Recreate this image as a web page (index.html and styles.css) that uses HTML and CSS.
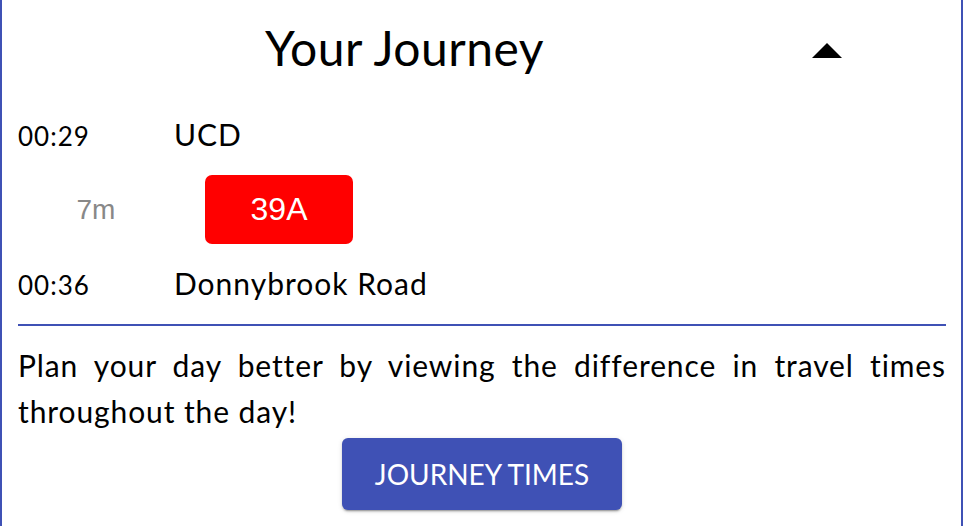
FILE: index.html
```html
<!DOCTYPE html>
<html>
<head>
<meta charset="utf-8">
<link rel="stylesheet" href="styles.css">
</head>
<body>
<div class="panel">
  <div class="header">
    <div class="title">Your Journey</div>
    <svg class="toggle" viewBox="0 0 24 24" width="72" height="72"><path d="M7 14l5-5 5 5z" fill="#000"/></svg>
  </div>
  <div class="stop first">
    <div class="time">00:29</div>
    <div class="name">UCD</div>
  </div>
  <div class="leg">
    <div class="duration">7m</div>
    <div class="badge">39A</div>
  </div>
  <div class="stop">
    <div class="time">00:36</div>
    <div class="name">Donnybrook Road</div>
  </div>
  <div class="divider"></div>
  <p class="info">Plan your day better by viewing the difference in travel times throughout the day!</p>
  <div class="actions">
    <button class="btn">Journey Times</button>
  </div>
</div>
</body>
</html>
```
FILE: styles.css
```css
html, body {
  margin: 0;
  padding: 0;
  background: #fff;
}
body {
  font-family: Lato, "Noto Sans", sans-serif;
  color: #000;
  height: 526px;
  overflow: hidden;
}
.panel {
  box-sizing: border-box;
  width: 963px;
  height: 526px;
  border-left: 2px solid #3f51b5;
  border-right: 2px solid #3f51b5;
  padding: 0 15px 0 16px;
}
.header {
  display: flex;
  align-items: flex-start;
  height: 96px;
}
.title {
  width: 773px;
  text-align: center;
  font-size: 48px;
  line-height: 58px;
  letter-spacing: 0.5px;
  margin-top: 19px;
}
.toggle {
  display: block;
  margin-top: 16px;
}
.stop {
  display: flex;
  align-items: baseline;
  height: 36px;
}
.stop.first {
  margin-top: 20px;
}
.time {
  width: 156px;
  font-size: 26px;
  line-height: 36px;
  letter-spacing: 1px;
}
.name {
  font-size: 30px;
  line-height: 36px;
  letter-spacing: 1px;
}
.leg {
  display: flex;
  align-items: center;
  padding: 23px 0 21px;
}
.duration {
  width: 156px;
  text-align: center;
  font-family: "Liberation Sans", Arial, sans-serif;
  font-size: 28px;
  color: #888;
}
.badge {
  margin-left: 31px;
  width: 148px;
  height: 69px;
  border-radius: 7px;
  background: #ff0000;
  color: #fff;
  font-family: "Liberation Sans", Arial, sans-serif;
  font-size: 32px;
  display: flex;
  align-items: center;
  justify-content: center;
}
.divider {
  margin-top: 23px;
  height: 2px;
  background: #3f51b5;
}
.info {
  margin: 16px 0 0;
  font-size: 30px;
  line-height: 46px;
  letter-spacing: 0.9px;
  text-align: justify;
}
.actions {
  display: flex;
  justify-content: center;
  margin-top: 4px;
}
.btn {
  width: 280px;
  height: 72px;
  border: none;
  border-radius: 6px;
  background: #3f51b5;
  color: #fff;
  font-family: Lato, sans-serif;
  font-size: 28px;
  text-transform: uppercase;
  box-shadow: 0 3px 1px -2px rgba(0,0,0,.2), 0 2px 2px 0 rgba(0,0,0,.14), 0 1px 5px 0 rgba(0,0,0,.12);
  padding: 0;
}
```
